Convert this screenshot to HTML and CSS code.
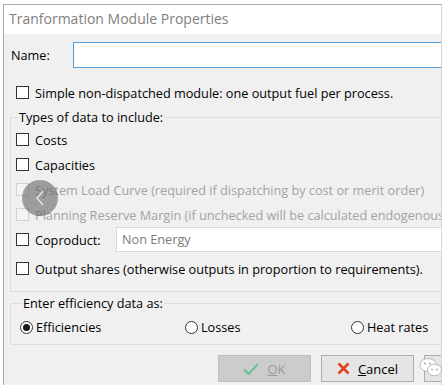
FILE: index.html
```html
<!DOCTYPE html>
<html lang="en">
<head>
    <meta charset="UTF-8">
    <title>Tranformation Module Properties</title>
    <link rel="stylesheet" href="styles.css">
</head>
<body>
    <div class="window">
        <div class="titlebar">Tranformation Module Properties</div>
        <div class="content">
            <div class="name-row">
                <span class="name-label">Name:</span>
                <div class="textbox focused"></div>
            </div>

            <div class="check top-check"><span class="box"></span>Simple non-dispatched module: one output fuel per process.</div>

            <fieldset class="group types">
                <legend>Types of data to include:</legend>
                <div class="check row"><span class="box"></span>Costs</div>
                <div class="check row"><span class="box"></span>Capacities</div>
                <div class="check row disabled"><span class="box"></span>System Load Curve (required if dispatching by cost or merit order)</div>
                <div class="check row disabled"><span class="box"></span>Planning Reserve Margin (if unchecked will be calculated endogenously)</div>
                <div class="check row coproduct">
                    <span class="box"></span><span class="coproduct-label">Coproduct:</span>
                    <div class="textbox combo">Non Energy</div>
                </div>
                <div class="check row shares"><span class="box"></span>Output shares (otherwise outputs in proportion to requirements).</div>
            </fieldset>

            <fieldset class="group efficiency">
                <legend>Enter efficiency data as:</legend>
                <div class="radios">
                    <div class="radio first"><span class="dot checked"></span>Efficiencies</div>
                    <div class="radio second"><span class="dot"></span>Losses</div>
                    <div class="radio"><span class="dot"></span>Heat rates</div>
                </div>
            </fieldset>

            <div class="buttons">
                <div class="btn btn-disabled">
                    <svg width="16" height="12" viewBox="0 0 16 12"><path d="M1 6.5 L5.5 11 L15 1" fill="none" stroke="#6cc29a" stroke-width="2.2"/></svg>
                    <span><u>O</u>K</span>
                </div>
                <div class="btn">
                    <svg width="13" height="13" viewBox="0 0 13 13"><path d="M1.5 1.5 L11.5 11.5 M11.5 1.5 L1.5 11.5" fill="none" stroke="#e2401f" stroke-width="2.6"/></svg>
                    <span><u>C</u>ancel</span>
                </div>
                <div class="btn"></div>
            </div>
        </div>
    </div>

    <!-- overlays from the screenshot tool -->
    <div class="nav-back">
        <svg width="10" height="16" viewBox="0 0 10 16"><path d="M8 1 L2 8 L8 15" fill="none" stroke="#e8e8e8" stroke-width="1.4"/></svg>
    </div>
    <div class="watermark">
        <svg width="24" height="22" viewBox="0 0 24 22">
            <ellipse cx="9" cy="8" rx="8" ry="6.5" fill="#fff" stroke="#b8b8b8" stroke-width="1"/>
            <ellipse cx="15.5" cy="13" rx="7" ry="5.8" fill="#fff" stroke="#b8b8b8" stroke-width="1"/>
            <circle cx="6" cy="6.5" r="1" fill="#aaa"/>
            <circle cx="11" cy="6.5" r="1" fill="#aaa"/>
            <circle cx="13" cy="12.5" r="0.9" fill="#aaa"/>
            <circle cx="18" cy="12.5" r="0.9" fill="#aaa"/>
        </svg>
    </div>
</body>
</html>
```

FILE: styles.css
```css
body {
    margin: 0;
    background-color: #ffffff;
    font-family: "Open Sans", "Noto Sans", sans-serif;
    font-size: 12.7px;
    color: #000;
    height: 385px;
    overflow: hidden;
    position: relative;
}
.window {
    margin: 4px 0 0 3px;
    width: 437px;
    height: 381px;
    border: 1px solid #a9a9a9;
    border-bottom: none;
    border-right-color: #d6d6d6;
    overflow: hidden;
    background-color: #f0f0f0;
}
.titlebar {
    height: 29px;
    line-height: 28px;
    padding-left: 5px;
    background-color: #fff;
    color: #808080;
    font-size: 14px;
    white-space: nowrap;
}
.content {
    padding: 8px 0 0 6px;
    white-space: nowrap;
}
.name-row {
    display: flex;
    align-items: center;
    height: 26px;
}
.name-label {
    flex: none;
    width: 62px;
    padding-left: 1px;
}
.textbox {
    flex: none;
    background-color: #fff;
    border: 1px solid #d9d9d9;
    box-sizing: border-box;
    height: 26px;
}
.textbox.focused {
    width: 400px;
    border-color: #4f9fdc;
}
.check {
    display: flex;
    align-items: center;
    height: 25px;
}
.box {
    width: 13px;
    height: 13px;
    box-sizing: border-box;
    border: 1px solid #333;
    background-color: #fff;
    margin-right: 6px;
    flex: none;
}
.top-check {
    margin-top: 12px;
    padding-left: 6px;
}
.group {
    margin: 3px 0 0 0;
    border: 1px solid #dcdcdc;
    padding: 1px 0 10px 5px;
    width: 460px;
}
.group legend {
    padding: 0 1px;
    margin-left: 2px;
    line-height: 18px;
}
.disabled {
    color: #a3a3a3;
}
.disabled .box {
    border-color: #d2d2d2;
    background-color: #f4f4f4;
}
.coproduct-label {
    flex: none;
    width: 81px;
}
.textbox.combo {
    width: 340px;
    height: 25px;
    line-height: 22px;
    padding-left: 5px;
    color: #7a7a7a;
}
.shares {
    margin-top: 4px;
}
.efficiency {
    margin-top: 2px;
    width: 426px;
    padding: 3px 0 5px 9px;
}
.radios {
    display: flex;
    align-items: center;
    height: 24px;
}
.radio {
    display: flex;
    align-items: center;
}
.radio.first {
    width: 165px;
}
.radio.second {
    width: 166px;
}
.dot {
    width: 13px;
    height: 13px;
    box-sizing: border-box;
    border: 1px solid #333;
    border-radius: 50%;
    background-color: #fff;
    margin-right: 3px;
    display: flex;
    align-items: center;
    justify-content: center;
}
.dot.checked::after {
    content: "";
    width: 7px;
    height: 7px;
    border-radius: 50%;
    background-color: #1a1a1a;
}
.buttons {
    display: flex;
    gap: 10px;
    margin-top: 10px;
    padding-left: 208px;
}
.btn {
    flex: none;
    width: 93px;
    height: 27px;
    box-sizing: border-box;
    border: 1px solid #adadad;
    background-color: #e5e5e5;
    display: flex;
    align-items: center;
    justify-content: center;
    gap: 8px;
    font-size: 13px;
}
.btn-disabled {
    background-color: #cccccc;
    border-color: #bfbfbf;
    color: #9a9a9a;
}
.nav-back {
    position: absolute;
    left: 22px;
    top: 180px;
    width: 36px;
    height: 36px;
    border-radius: 50%;
    background-color: rgba(90, 90, 90, 0.55);
    display: flex;
    align-items: center;
    justify-content: center;
}
.watermark {
    position: absolute;
    left: 419px;
    top: 357px;
}
```
